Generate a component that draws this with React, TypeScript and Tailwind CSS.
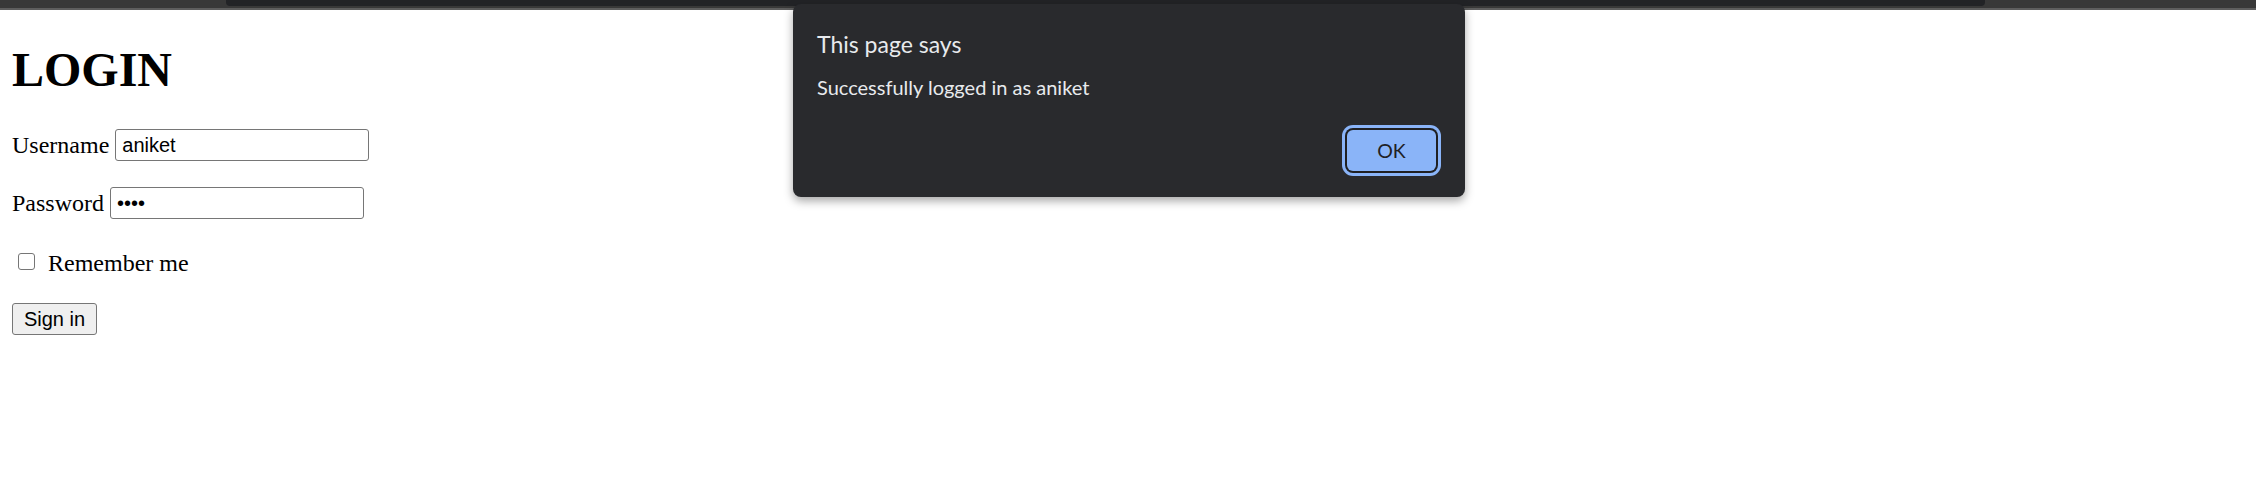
import React from "react";

const serif = "font-['Liberation_Serif','Times_New_Roman',serif]";
const sans = "font-['Liberation_Sans',Arial,sans-serif]";
const ui = "font-['Lato','Noto_Sans',sans-serif]";

function Field({ label, value, type }: { label: string; value: string; type: string }) {
  return (
    <div className="flex h-[32px] items-center gap-[6px]">
      <label className={`${serif} text-[24px] leading-[32px] text-black`}>{label}</label>
      <input
        type={type}
        readOnly
        defaultValue={value}
        className={`${sans} h-[32px] w-[254px] rounded-[3px] border-[1.5px] border-[#767676] bg-white px-[6px] text-[20px] text-black outline-none`}
      />
    </div>
  );
}

export default function App() {
  return (
    <div className="relative h-[496px] w-[2256px] overflow-hidden bg-white">
      {/* browser strip */}
      <div className="h-[8px] bg-[#383838] pl-[226px]">
        <div className="h-[6px] w-[1759px] rounded-b-[4px] bg-[#222326]" />
      </div>
      <div className="h-[2px] bg-[#5e5e5e]" />

      <div className="px-[12px]">
        <h1 className={`${serif} mt-[32px] text-[48px] font-bold leading-[55px] text-black`}>LOGIN</h1>

        <div className="mt-[32px]">
          <Field label="Username" value="aniket" type="text" />
        </div>
        <div className="mt-[26px]">
          <Field label="Password" value="abcd" type="password" />
        </div>

        <div className="mt-[31px] flex h-[26px] items-center">
          <span className="mb-[4px] ml-[6px] h-[17px] w-[17px] rounded-[3px] border-[1.5px] border-[#767676] bg-white" />
          <span className={`${serif} ml-[13px] text-[24px] leading-[26px] text-black`}>Remember me</span>
        </div>

        <button
          className={`${sans} mt-[27px] h-[32px] w-[85px] rounded-[3px] border-[1.5px] border-[#767676] bg-[#efefef] text-[20px] text-black`}
        >
          Sign in
        </button>
      </div>

      {/* alert dialog */}
      <div className="absolute left-[793px] top-[4px] flex h-[193px] w-[672px] flex-col rounded-[8px] bg-[#292a2d] px-[24px] shadow-[0_4px_10px_rgba(0,0,0,0.35)]">
        <div className={`${ui} mt-[24px] text-[23px] leading-[32px] text-[#e8eaed]`}>This page says</div>
        <div className={`${ui} mt-[13px] text-[20px] leading-[28px] text-[#e8eaed]`}>
          Successfully logged in as aniket
        </div>
        <div className="mt-auto mb-[26px] flex justify-end pr-[5px]">
          <button
            className={`${ui} h-[41px] w-[89px] rounded-[6px] bg-[#8ab4f8] text-[19.5px] text-[#202124] shadow-[0_0_0_2px_#1f2023,0_0_0_5px_#8ab4f8]`}
          >
            OK
          </button>
        </div>
      </div>
    </div>
  );
}
